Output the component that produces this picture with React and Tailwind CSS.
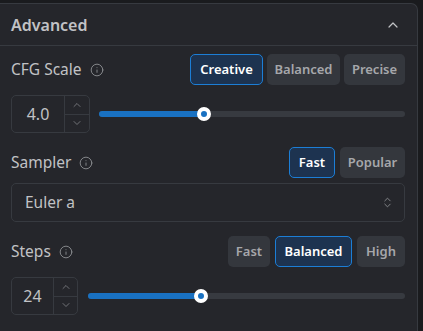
import { ChevronUp, ChevronDown, ChevronsUpDown, Info } from 'lucide-react'

function Seg({ label, active, w }) {
  return (
    <button
      className={`h-[31px] ${w} rounded-[5px] border text-[13px] font-semibold ${
        active
          ? 'bg-[#1d3350] border-[#1c7ed6] text-white'
          : 'bg-[#34373d] border-transparent text-[#a6a7ab]'
      }`}
    >
      {label}
    </button>
  )
}

function Label({ text }) {
  return (
    <div className="flex items-center gap-[8px] text-[15.5px] text-[#c1c2c5]">
      <span>{text}</span>
      <Info size={14} strokeWidth={1.5} className="text-[#909296] mt-[1px]" />
    </div>
  )
}

function NumberBox({ value, w, left }) {
  return (
    <div className={`flex h-[38px] ${w} rounded-[5px] border border-[#373a40] shrink-0`}>
      <div className={`${left} flex items-center justify-center text-[16px] text-[#c1c2c5] border-r border-[#373a40]`}>
        {value}
      </div>
      <div className="flex-1 flex flex-col">
        <div className="flex-1 flex items-center justify-center border-b border-[#373a40]">
          <ChevronUp size={12} strokeWidth={1.4} className="text-[#909296]" />
        </div>
        <div className="flex-1 flex items-center justify-center">
          <ChevronDown size={12} strokeWidth={1.4} className="text-[#909296]" />
        </div>
      </div>
    </div>
  )
}

function Slider({ pct }) {
  return (
    <div className="relative flex-1 h-[6px] rounded-full bg-[#373a40]">
      <div className="absolute left-0 top-0 h-full rounded-full bg-[#1971c2]" style={{ width: `${pct}%` }} />
      <div
        className="absolute top-1/2 w-[14px] h-[14px] -translate-x-1/2 -translate-y-1/2 rounded-full bg-[#1971c2] border-[4px] border-white"
        style={{ left: `${pct}%` }}
      />
    </div>
  )
}

export default function App() {
  return (
    <div className="w-[423px] h-[331px] bg-[#1a1b1e] overflow-hidden pt-[3px]" style={{ fontFamily: '"Noto Sans", sans-serif' }}>
      <div className="w-[418px] h-[340px] bg-[#25262b] border-t border-r border-[#373a40] rounded-tr-[7px]">
        <div className="h-[42px] flex items-center justify-between pl-[11px] pr-[16px] border-b border-[#373a40]">
          <span className="text-[16px] font-semibold text-[#c1c2c5]">Advanced</span>
          <ChevronUp size={16} strokeWidth={1.8} className="text-[#c1c2c5]" />
        </div>

        <div className="pl-[11px] pr-[12px] pt-[8px]">
          <div className="flex items-center justify-between">
            <Label text="CFG Scale" />
            <div className="flex gap-[4px]">
              <Seg label="Creative" active w="w-[73px]" />
              <Seg label="Balanced" w="w-[73px]" />
              <Seg label="Precise" w="w-[61px]" />
            </div>
          </div>

          <div className="flex items-center gap-[9px] mt-[10px]">
            <NumberBox value="4.0" w="w-[79px]" left="w-[53px]" />
            <Slider pct={34.3} />
          </div>

          <div className="flex items-center justify-between mt-[14px]">
            <Label text="Sampler" />
            <div className="flex gap-[5px]">
              <Seg label="Fast" active w="w-[46px]" />
              <Seg label="Popular" w="w-[65px]" />
            </div>
          </div>

          <div className="mt-[5px] h-[39px] rounded-[5px] border border-[#373a40] flex items-center justify-between pl-[13px] pr-[10px]">
            <span className="text-[15.5px] text-[#c1c2c5]">Euler a</span>
            <ChevronsUpDown size={13} strokeWidth={1.6} className="text-[#909296]" />
          </div>

          <div className="flex items-center justify-between mt-[14px]">
            <Label text="Steps" />
            <div className="flex gap-[5px]">
              <Seg label="Fast" w="w-[42px]" />
              <Seg label="Balanced" active w="w-[77px]" />
              <Seg label="High" w="w-[48px]" />
            </div>
          </div>

          <div className="flex items-center gap-[10px] mt-[10px]">
            <NumberBox value="24" w="w-[67px]" left="w-[42px]" />
            <Slider pct={35.6} />
          </div>
        </div>
      </div>
    </div>
  )
}
